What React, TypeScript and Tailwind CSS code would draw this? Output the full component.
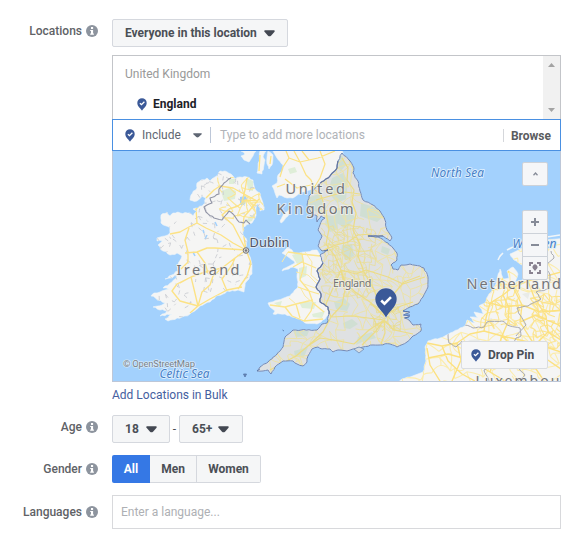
import React from "react";

/* Seeded generator so that coastlines and minor roads are stable between renders. */
function seeded(seed: number) {
  let s = seed;
  return () => {
    s = (s * 16807) % 2147483647;
    return s / 2147483647;
  };
}

/* Builds an irregular mesh of minor roads over a rectangle. */
function mesh(x0: number, y0: number, x1: number, y1: number, step: number, keep: number, seed: number) {
  const rnd = seeded(seed);
  const cols = Math.ceil((x1 - x0) / step) + 1;
  const rows = Math.ceil((y1 - y0) / step) + 1;
  const pts: [number, number][][] = [];
  for (let r = 0; r < rows; r++) {
    pts.push([]);
    for (let c = 0; c < cols; c++) {
      pts[r].push([x0 + (c + (rnd() - 0.5) * 1.1) * step, y0 + (r + (rnd() - 0.5) * 1.1) * step]);
    }
  }
  let d = "";
  const link = (a: [number, number], b: [number, number]) => {
    const mx = (a[0] + b[0]) / 2 + (rnd() - 0.5) * step * 0.5;
    const my = (a[1] + b[1]) / 2 + (rnd() - 0.5) * step * 0.5;
    d += `M${a[0].toFixed(1)} ${a[1].toFixed(1)}Q${mx.toFixed(1)} ${my.toFixed(1)} ${b[0].toFixed(1)} ${b[1].toFixed(1)}`;
  };
  for (let r = 0; r < rows; r++) {
    for (let c = 0; c < cols; c++) {
      if (c + 1 < cols && rnd() < keep) link(pts[r][c], pts[r][c + 1]);
      if (r + 1 < rows && rnd() < keep) link(pts[r][c], pts[r + 1][c]);
      if (r + 1 < rows && c + 1 < cols && rnd() < keep * 0.4) link(pts[r][c], pts[r + 1][c + 1]);
    }
  }
  return d;
}

/* Splits each segment and displaces the new points sideways. The offset depends only
   on the segment itself, so outlines that share an edge stay in step. */
function rough(d: string, amp: number) {
  return d.replace(/M[^MZ]*Z?/g, (part) => {
    const closed = part.endsWith("Z");
    const pts = part
      .replace(/[MZ]/g, "")
      .split("L")
      .map((p) => p.trim().split(" ").map(Number));
    const list = closed ? [...pts, pts[0]] : pts;
    let out = `M${list[0][0]} ${list[0][1]}`;
    for (let i = 1; i < list.length; i++) {
      const flip = list[i - 1][1] > list[i][1] || (list[i - 1][1] === list[i][1] && list[i - 1][0] > list[i][0]);
      const [a, b] = flip ? [list[i], list[i - 1]] : [list[i - 1], list[i]];
      const dx = b[0] - a[0];
      const dy = b[1] - a[1];
      const len = Math.hypot(dx, dy);
      const n = Math.max(1, Math.round(len / 2.6));
      const mids: string[] = [];
      for (let k = 1; k < n; k++) {
        const h = Math.sin(a[0] * 12.9 + b[1] * 78.2 + k * 37.7) * 43758.5;
        const o = (h - Math.floor(h) - 0.5) * 2 * amp;
        mids.push(`L${(a[0] + (dx * k) / n - (dy / len) * o).toFixed(1)} ${(a[1] + (dy * k) / n + (dx / len) * o).toFixed(1)}`);
      }
      if (flip) mids.reverse();
      out += mids.join("") + `L${list[i][0]} ${list[i][1]}`;
    }
    return out + (closed ? "Z" : "");
  });
}

const IRELAND = rough(
  "M225 171L231 174L235 179L240 177L247 177L253 180L255 189L260 193L263 203L264 210L260 211L258 203L256 208L255 218L252 223L249 224L243 227L243 235L247 241L245 248L249 255L252 265L252 274L247 281L245 286L244 292L238 290L235 291L227 291L223 294L216 296L210 302L200 306L196 310L190 314L182 317L177 318L168 321L165 319L172 314L160 316L167 311L160 310L153 307L162 305L165 303L151 296L154 293L160 292L172 289L163 288L172 282L177 276L165 279L178 271L178 265L182 256L177 253L170 255L163 251L158 245L165 240L157 241L157 238L165 236L170 233L170 228L161 223L161 215L167 212L170 216L173 213L190 213L193 216L197 211L193 209L202 206L205 203L206 198L202 196L197 201L190 200L191 195L197 188L197 183L207 178L210 181L218 175L220 171Z",
  0.9,
);
const SCOTLAND = rough(
  "M273 151L277 158L283 165L283 170L278 175L277 183L272 186L275 193L277 198L279 195L287 198L293 198L300 193L310 190L318 185L330 176L337 168L338 161L343 155L342 150L273 150Z",
  0.5,
);
const ISLES = rough(
  "M260 151L258 168L257 173L262 174L264 165L265 160L263 157L266 151ZM268 151L273 155L272 165L269 169L267 164ZM291 209L288 216L281 223L280 221L284 213ZM241 151L256 151L253 156L249 162L244 160L241 156L245 154Z",
  0.6,
);
const ENGLAND = rough(
  "M342 153L350 161L354 168L353 173L358 181L360 191L363 200L373 205L380 211L385 220L387 230L392 238L390 241L383 236L368 236L378 237L388 243L393 248L397 253L397 260L393 263L391 265L393 269L398 270L401 265L410 264L420 266L424 268L428 277L428 287L423 297L418 304L410 307L403 311L410 312L404 315L410 316L405 318L410 321L413 325L421 324L421 331L413 336L407 342L397 347L390 344L373 345L363 347L353 349L347 351L338 350L333 352L330 349L322 349L318 347L312 349L308 356L307 362L303 366L297 364L293 361L283 361L275 367L271 374L268 370L263 371L257 371L260 367L268 362L277 354L283 347L285 337L293 330L317 330L322 324L327 323L329 314L328 307L320 302L321 294L316 287L320 279L317 271L323 263L320 255L328 250L322 251L318 246L322 236L318 230L322 220L325 218L321 216L317 222L317 216L313 215L307 205L309 196L313 191L318 185L330 176L337 168L338 161Z",
  0.5,
);
const WALES = rough(
  "M323 263L320 255L317 250L305 252L294 254L292 250L287 248L282 253L287 256L294 261L295 263L283 269L282 271L293 267L298 269L297 277L298 287L290 296L278 300L268 303L270 307L275 311L273 314L285 314L292 317L300 319L305 323L317 324L325 319L329 314L328 307L320 302L321 294L316 287L320 279L317 271Z",
  0.5,
);
const CONTINENT = rough(
  "M398 383L402 379L410 377L423 372L426 361L425 347L428 341L440 338L453 332L465 326L467 320L475 323L470 317L478 318L474 312L484 314L479 306L485 303L488 296L495 286L500 269L503 279L509 278L507 271L513 267L518 274L515 282L524 279L530 272L522 265L514 260L510 254L523 248L547 240L562 238L562 383Z",
  0.5,
);
const BORDER = rough(
  "M323 263L317 271L320 279L316 287L321 294L320 302L328 307L329 314M318 185L330 176L337 168L338 161",
  0.5,
);

const IRISH_ROADS =
  "M246 250L230 249L215 248L207 248L197 252L185 253M246 250L233 243L221 235L206 228L197 223L196 209L204 201M246 250L244 237L243 225L244 217L255 204L259 199M197 223L189 227L180 232L170 234M189 228L185 240L188 252L188 262L181 269M246 250L235 258L222 268L205 272L191 277L180 283M191 277L193 285L198 306L190 313M191 277L177 284L172 291L180 301L198 306M198 306L202 292L210 285L213 276L222 268M227 291L222 279L232 265L235 258M198 306L210 299L227 290L242 287M246 250L251 263L247 276L238 289M206 198L214 190L220 186L233 188L244 194L257 201M229 209L238 206L245 200L258 201M229 209L222 215L233 225L246 250M247 178L245 190L242 202M197 252L205 263L208 273";
const SCOTTISH_ROADS =
  "M286 151L289 158L300 162L306 175L311 180L315 190M289 158L283 167L280 177M300 162L318 158L335 151M294 151L300 162M285 179L297 188L311 185M277 187L285 184M320 151L325 164L320 178L314 188M302 151L309 160M260 155L259 171M271 156L270 164";
const WELSH_ROADS =
  "M288 252L302 254L320 256M293 267L302 262L316 268M302 254L304 266L300 280L309 291L319 294M298 287L309 291L313 303L324 312M270 305L285 307L296 304L313 300M285 307L292 316L304 321L323 319M296 304L300 318M304 321L311 311L313 303";
const ENGLISH_ROADS =
  "M342 158L348 168L347 180L354 190L352 202L356 213L353 230L360 244L358 256L364 272L374 290L382 311M315 190L321 195L326 212L329 229L326 244L335 256L341 270L345 282L355 292L370 302L384 316M341 270L333 288L326 304L331 317L323 332L308 346L296 356L270 370M384 320L368 318L352 316L331 317M384 320L394 330L413 334M384 320L385 333L381 344M384 320L375 332L362 345M384 320L369 330L354 344M386 315L401 306L413 302M386 315L392 296L404 282L420 276M322 251L336 245L348 242L358 235L372 234M316 200L330 196L345 192L360 194M341 270L356 274L366 270L388 277L403 284L425 277M331 317L342 305L345 290L341 270M308 346L320 338L334 340L354 344";
const CONTINENT_ROADS =
  "M427 343L442 346L457 343L470 334L484 331L502 336L520 340L540 345L561 352M427 348L430 365L440 381M442 346L448 361L462 374L475 381M428 358L448 354L470 360L490 372L505 381M457 343L461 360L452 381M484 331L486 318L490 303L503 295L513 287L528 281L561 272M490 303L505 307L522 305L540 312L561 310M503 295L509 308L508 322L502 336L490 372M513 287L522 305L520 322L530 338L542 356L561 369M497 290L503 278L509 271M528 258L536 266L528 281L534 297L546 316L548 332L561 340M548 332L535 345L532 363L544 381M520 322L536 315L561 326M502 336L517 351L532 363";

const ENGLAND_MESH = mesh(252, 150, 432, 376, 8.5, 0.66, 4177);
const URBAN_MESH = mesh(324, 226, 370, 296, 5, 0.74, 911);
const LONDON_MESH = mesh(372, 306, 398, 329, 4, 0.8, 77);
const CONTINENT_MESH = mesh(396, 236, 570, 386, 10, 0.55, 5231);
const RHINE_MESH = mesh(533, 296, 561, 346, 5, 0.75, 311);
const DUTCH_MESH = mesh(484, 284, 520, 322, 6, 0.7, 67);
const IRELAND_MESH = mesh(150, 172, 266, 322, 9, 0.3, 991);
const NI_MESH = mesh(222, 180, 264, 216, 8, 0.5, 321);

function MapPicture() {
  const label = { fontFamily: '"Noto Sans", sans-serif' };
  return (
    <svg viewBox="113 151 447 230" className="block h-full w-full" fill="none" strokeLinejoin="round">
      <defs>
        <clipPath id="ireland"><path d={IRELAND} /></clipPath>
        <clipPath id="england"><path d={ENGLAND} /></clipPath>
        <clipPath id="continent"><path d={CONTINENT} /></clipPath>
      </defs>
      <rect x="112" y="151" width="449" height="231" fill="#a3d1fd" />
      <g fill="#f5f5f4" stroke="#eff5f9" strokeWidth="0.6">
        <path d={IRELAND} />
        <path d={SCOTLAND} />
        <path d={ISLES} />
        <path d={WALES} />
        <path d={ENGLAND} />
        <path d={CONTINENT} />
        <path d="M498 260L500 256L503 253M507 250L513 247M517 245L524 243M530 241L540 239M547 237L560 235" strokeWidth="1.6" />
      </g>

      <g fill="#dfeed8">
        <path d="M221 191L229 188L236 191L235 199L224 201ZM229 179L236 179L234 184L229 184ZM246 178L253 181L253 191L248 190ZM249 217L255 214L252 221L245 223Z" />
        <path d="M292 255L302 252L304 261L297 264ZM299 268L307 266L306 276L299 279ZM299 302L316 302L314 309L302 308ZM274 303L282 301L280 307ZM312 314L325 311L322 318L313 317Z" />
        <path d="M288 169L295 167L297 172L290 174Z" />
      </g>
      <path d="M240 197L246 196L247 200L244 205L240 205Z" fill="#a3d1fd" />
      <path d="M203 230L204 233M193 252L195 256M215 222L217 226M207 235L205 239" stroke="#a3d1fd" strokeWidth="1.6" />

      <g clipPath="url(#ireland)">
        <path d={IRELAND_MESH} stroke="#cbcdd2" strokeWidth="0.9" strokeDasharray="4 5" />
        <path d={NI_MESH} stroke="#fae695" strokeWidth="1.1" />
        <path d={IRISH_ROADS} stroke="#fce285" strokeWidth="1.35" />
      </g>
      <path d={rough("M231 178L224 183L219 189L219 194L210 198L212 203L204 207L206 212L214 218L222 220L229 211L233 214L239 222L244 223L246 220L250 224", 0.5)} stroke="#9295a6" strokeWidth="1.1" />

      <path d={SCOTTISH_ROADS} stroke="#fce285" strokeWidth="1.25" />
      <path d={WELSH_ROADS} stroke="#fce58c" strokeWidth="1.3" />
      <path d="M288 252L282 262M296 272L308 275L317 284M289 298L296 304M305 252L312 262L311 275L318 281M304 284L318 289M313 303L305 296L300 287" stroke="#fae9a6" />

      <g clipPath="url(#england)">
        <path d={ENGLAND} fill="#dfe1e2" />
        <g fill="#d0dfd3">
          <path d="M332 178L343 173L348 181L346 199L337 203L328 192ZM337 158L342 155L346 165L340 172ZM307 198L319 194L324 204L320 213L309 209ZM327 215L337 217L338 229L330 232L325 224ZM333 209L350 208L355 218L346 229L337 223ZM361 203L374 207L384 216L377 222L360 216ZM342 245L352 244L354 256L346 260L341 252ZM382 246L390 249L388 255L381 252ZM334 302L344 298L350 304L347 311L336 309ZM343 323L352 319L358 324L350 329L344 328ZM294 351L308 347L304 357L295 357ZM293 331L309 331L307 336L296 337ZM358 337L372 332L376 338L362 342L356 345Z" />
        </g>
        <path d={ENGLAND_MESH} stroke="#ebe2a9" strokeWidth="1" />
        <path d={URBAN_MESH} stroke="#e9dd97" strokeWidth="0.8" />
        <path d={LONDON_MESH} stroke="#e8dc93" strokeWidth="0.9" />
        <path d={ENGLISH_ROADS} stroke="#ecdc87" strokeWidth="1.25" />
      </g>
      <path d={ENGLAND} stroke="#6f88b8" strokeWidth="1" />
      <path d={BORDER} stroke="#6576a0" strokeWidth="1.2" />
      <path d="M354 349L359 347L364 349L359 353Z" fill="#d5dce1" stroke="#718db6" strokeWidth="0.8" />
      <path d="M403 311L409 312M403 315L410 315M404 318L409 317" stroke="#4f71ad" strokeWidth="0.9" />
      <path d="M324 251L328 250M368 236L383 236" stroke="#6576a0" />
      <path d="M243.500 374L246.500 374L245 377ZM257 371L260 369M282.500 330L284 331" stroke="#5473a7" strokeWidth="0.8" fill="#6b89b6" />

      <g clipPath="url(#continent)">
        <path d="M468 340L480 339L478 347ZM522 294L530 292L528 299ZM534 352L548 349L546 359ZM484 320L492 318L493 324Z" fill="#e9ebe8" />
        <path d={CONTINENT_MESH} stroke="#fbecad" strokeWidth="1.1" />
        <path d={RHINE_MESH} stroke="#fbe38c" strokeWidth="1.1" />
        <path d={DUTCH_MESH} stroke="#fbe48f" strokeWidth="1.1" />
        <path d={CONTINENT_ROADS} stroke="#fce180" strokeWidth="1.4" />
        <path d={rough("M448 334L449 343L456 347L462 341M465 325L473 328L484 327L487 322L502 321L510 326L520 328L521 336L516 338L510 348L517 358M516 336L526 325L520 315L517 308L528 306L541 299L536 292L549 289L550 275L546 266L554 258L551 251M522 357L517 367L525 375L518 381M489 381L484 370L493 365", 0.6)} stroke="#a8aab0" strokeWidth="1" />
      </g>

      <g style={label} paintOrder="stroke" stroke="#f4f4f2" strokeOpacity="0.7" strokeWidth="2" fill="#737478">
        <text x="285.5" y="194" fontSize="14.5" textLength="59.500" lengthAdjust="spacing">United</text>
        <text x="276.500" y="214" fontSize="14.5" textLength="77" lengthAdjust="spacing">Kingdom</text>
        <text x="176.500" y="274.5" fontSize="14.5" textLength="63" lengthAdjust="spacing">Ireland</text>
        <text x="466.500" y="288.500" fontSize="14.5" letterSpacing="1.9">Netherland</text>
        <text x="475.500" y="386" fontSize="14" letterSpacing="2">Luxembou</text>
        <text x="333" y="287" fontSize="10.8" textLength="38.500" strokeOpacity="0.6">England</text>
        <text x="249.500" y="247" fontSize="12.800" textLength="40" fill="#4e5264">Dublin</text>
      </g>
      <g style={label} fontStyle="italic" paintOrder="stroke" stroke="#dceefd" strokeWidth="1.8" fill="#477fc7">
        <text x="431" y="177" fontSize="11.800" textLength="53">North Sea</text>
        <text x="159.500" y="378" fontSize="11.800" textLength="50">Celtic Sea</text>
        <text x="512.500" y="248" fontSize="12" textLength="44">Wadden</text>
      </g>
      <circle cx="246" cy="250.500" r="2.800" fill="#d8d7d3" stroke="#77787c" />
      <circle cx="246" cy="250.500" r="1.200" fill="#77787c" />
      <text x="123" y="366.500" fontSize="9.500" textLength="72" paintOrder="stroke" stroke="#d3e8fb" strokeWidth="1.600" fill="#7b8288" style={{ fontFamily: "Roboto, sans-serif" }}>© OpenStreetMap</text>

      <path d="M386 317.500C383 311 375.300 307 375.300 299A10.700 10.700 0 0 1 396.700 299C396.700 307 389 311 386 317.500Z" fill="#3b5998" />
      <path d="M381.200 300.500L384.500 303.700L391 297.200" stroke="#fff" strokeWidth="2.600" strokeLinejoin="miter" />
    </svg>
  );
}

function Pin() {
  return (
    <svg className="block h-[13px] w-[10px] shrink-0" viewBox="0 0 10 13" fill="none">
      <path d="M5 12.800C4 10.600 .3 8.400 .3 4.900A4.700 4.700 0 0 1 9.700 4.900C9.700 8.400 6 10.600 5 12.800Z" fill="#3b5998" />
      <path d="M2.900 5.200L4.500 6.700L7.400 3.800" stroke="#fff" strokeWidth="1.3" />
    </svg>
  );
}

function Info() {
  return (
    <svg className="block h-3 w-3 shrink-0" viewBox="0 0 12 12">
      <circle cx="6" cy="6" r="6" fill="#8d949e" />
      <path d="M5 2.100H7.100V3.900H5ZM4.200 4.900H7.100V8.500H7.900V9.700H4.200V8.500H5V6.100H4.200Z" fill="#fff" />
    </svg>
  );
}

function Caret({ small = false }: { small?: boolean }) {
  return (
    <svg className={small ? "block h-[5px] w-[9px]" : "block h-[7px] w-[11px]"} viewBox="0 0 11 7" preserveAspectRatio="none">
      <path d="M.8 .2H10.200Q11.200 .8 10.500 1.700L7 5.700Q5.500 7 4 5.700L.5 1.700Q-.2 .8 .8 .2Z" fill={small ? "#5f6673" : "#434852"} />
    </svg>
  );
}

function Label({ children }: { children: React.ReactNode }) {
  return (
    <div className="flex h-6 w-[98px] shrink-0 items-center justify-end gap-1 text-[12px] font-medium text-[#606266]">
      <span>{children}</span>
      <Info />
    </div>
  );
}

const button = "flex h-7 items-center rounded-[2px] border border-[#d5d8de] bg-[#f5f6f7] text-[12px] font-bold text-[#4b4f56]";
const mapButton = "flex w-[26px] items-center justify-center border border-[#cdd2d9] bg-[#f5f6f8] text-[#868b98]";

export default function App() {
  return (
    <main className="flex h-[545px] w-[580px] flex-col overflow-hidden bg-white pt-[19px] font-['Roboto',sans-serif] text-[12px] leading-4">
      <section className="flex gap-[14px]">
        <Label>Locations</Label>
        <div className="w-[449px]">
          <button className={`${button} w-[176px] gap-[7px] pl-3`}>
            <span className="whitespace-nowrap">Everyone in this location</span>
            <Caret />
          </button>

          <div className="mt-2 flex h-16 border border-b-0 border-[#c3c5c9]">
            <div className="flex-1 pl-3 pt-[10px]">
              <div className="text-[#999]">United Kingdom</div>
              <div className="mt-[14px] flex items-center gap-[6px] pl-3 font-bold text-[#1d2129]">
                <Pin />
                England
              </div>
            </div>
            <div className="flex w-[17px] flex-col items-center justify-between bg-[#f1f1f1] py-[7px]">
              <svg className="h-1 w-[7px]" viewBox="0 0 7 4"><path d="M0 4L3.500 0L7 4Z" fill="#a3a3a3" /></svg>
              <svg className="h-1 w-[7px]" viewBox="0 0 7 4"><path d="M0 0H7L3.500 4Z" fill="#a3a3a3" /></svg>
            </div>
          </div>

          <div className="flex h-8 items-center border border-[#4a90e2] pl-3 pr-[9px]">
            <Pin />
            <span className="ml-[7px] w-[51px] text-[#606671]">Include</span>
            <Caret small />
            <div className="ml-2 h-4 w-px bg-[#bdc7d8]" />
            <span className="ml-[9px] flex-1 text-[#b0b3b8]">Type to add more locations</span>
            <div className="mr-[7px] h-[13px] w-px bg-[#d5d7db]" />
            <span className="pt-px font-bold text-[#5a5c60]">Browse</span>
          </div>

          <div className="relative h-[231px] overflow-hidden border border-t-0 border-[#bdc7d8]">
            <MapPicture />
            <div className={`${mapButton} absolute right-3 top-[11px] h-6 rounded-[2px]`}>
              <svg className="h-1 w-[5px]" viewBox="0 0 5 4" fill="none" stroke="currentColor" strokeWidth="1.3"><path d="M.5 3.200L2.500 1L4.500 3.200" /></svg>
            </div>
            <div className="absolute right-3 top-[59px] flex flex-col">
              <div className={`${mapButton} h-6 rounded-t-[2px]`}>
                <svg className="h-2 w-2" viewBox="0 0 8 8"><path d="M3 0H5V3H8V5H5V8H3V5H0V3H3Z" fill="currentColor" /></svg>
              </div>
              <div className={`${mapButton} -mt-px h-6`}><div className="h-[2px] w-2 bg-[#868b98]" /></div>
              <div className={`${mapButton} -mt-px h-6 rounded-b-[2px]`}>
                <svg className="h-3 w-3" viewBox="0 0 12 12" fill="none" stroke="#88808f" strokeWidth="1.8">
                  <path d="M1 4V1H4M8 1H11V4M11 8V11H8M4 11H1V8" />
                  <path d="M6 9L3.900 6.600A2.600 2.600 0 1 1 8.100 6.600Z" fill="#88808f" stroke="none" />
                </svg>
              </div>
            </div>
            <button className="absolute bottom-3 right-3 flex h-7 w-[87px] items-center gap-[7px] rounded-[2px] border border-[#dadde1] bg-[#f5f6f8] pl-[9px] text-[12px] font-bold text-[#4b4f56]">
              <Pin />
              Drop Pin
            </button>
          </div>
          <a className="mt-[5px] block h-4 text-[#4560a0]">Add Locations in Bulk</a>
        </div>
      </section>

      <section className="mt-3 flex gap-[14px]">
        <Label>Age</Label>
        <div className="flex items-center">
          <button className={`${button} w-[58px] gap-[7px] pl-3`}>18<Caret /></button>
          <span className="w-[9px] text-center text-[#4b4f56]">-</span>
          <button className={`${button} w-[64px] gap-[6px] pl-3`}>65+<Caret /></button>
        </div>
      </section>

      <section className="mt-3 flex items-center gap-[14px]">
        <Label>Gender</Label>
        <div className="flex h-7 text-[12px] font-bold text-[#4b4f56]">
          <button className="w-[38px] rounded-l-[2px] bg-[#3578e5] text-white">All</button>
          <button className="w-[47px] border-y border-r border-[#d5d8de] bg-[#f5f6f7]">Men</button>
          <button className="w-16 rounded-r-[2px] border border-l-0 border-[#d5d8de] bg-[#f5f6f7]">Women</button>
        </div>
      </section>

      <section className="mt-3 flex items-center gap-[14px]">
        <Label>Languages</Label>
        <div className="flex h-[34px] w-[449px] items-center border border-[#d8d9dc] pl-2 text-[#aeb0b4]">Enter a language...</div>
      </section>
    </main>
  );
}
